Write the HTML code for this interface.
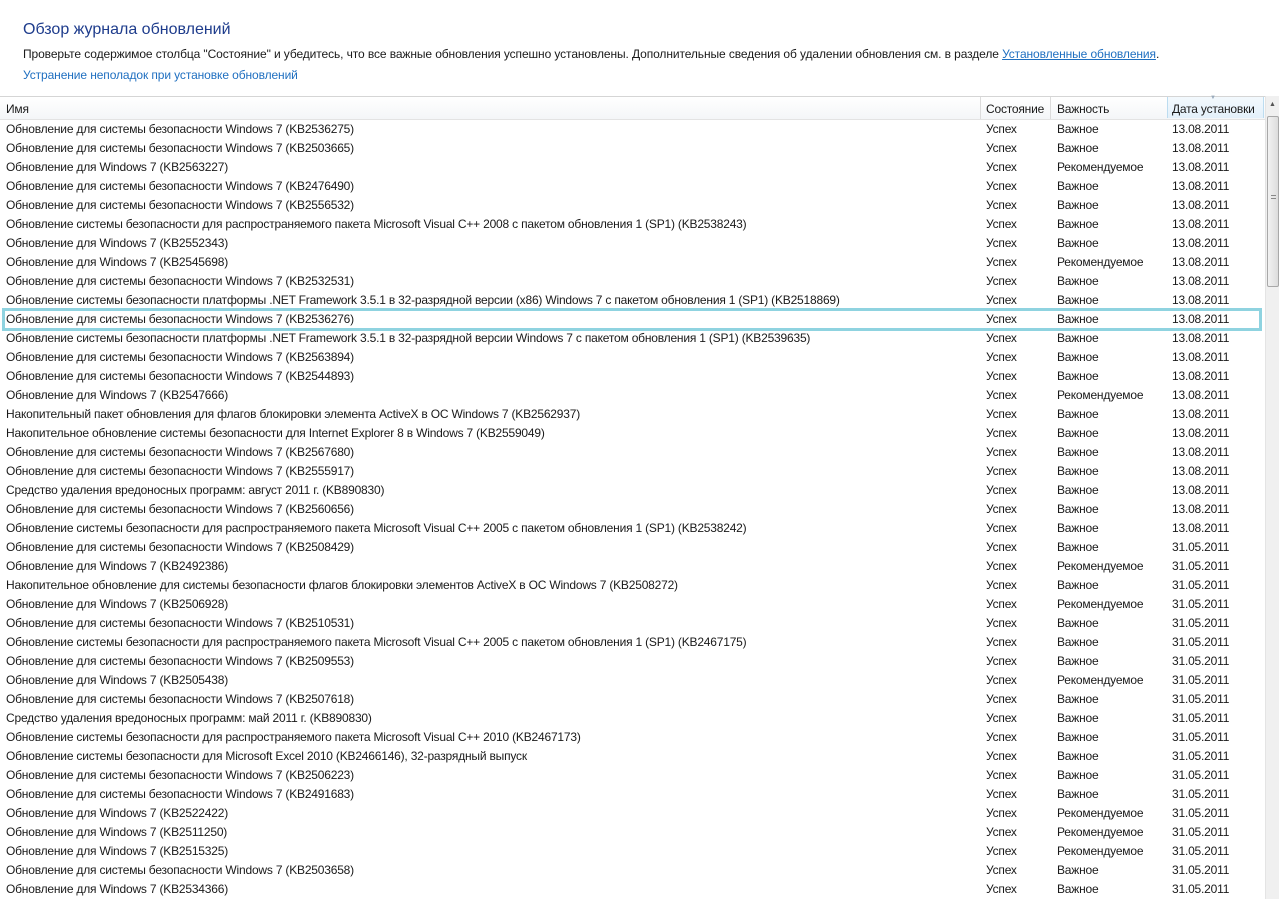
<!DOCTYPE html>
<html><head><meta charset="utf-8"><style>
body{margin:0;width:1279px;height:899px;overflow:hidden;background:#fff;font-family:"Liberation Sans",sans-serif;font-size:12px;color:#1a1a1a;position:relative}
.t{position:absolute;left:23px;top:21px;font-size:16px;color:#1e3c8c}
.p{position:absolute;left:23px;top:47px;white-space:nowrap;letter-spacing:-0.1px}
.p a{color:#1f6fc0;text-decoration:underline}
.l{position:absolute;left:23px;top:68px;color:#1f6fc0;letter-spacing:-0.1px}
.hdr{position:absolute;left:0;top:96px;width:1265px;height:22px;border-top:1px solid #d5d5d5;border-bottom:1px solid #e3e3e3;background:linear-gradient(#fff,#f4f6f8);letter-spacing:-0.2px}
.hdr span{position:absolute;top:5px}
.hdr i{position:absolute;top:0;width:1px;height:22px;background:#dcdcdc}
.sel{position:absolute;left:1167px;top:0;width:95px;height:21px;background:linear-gradient(#f3f9fd,#e3f0fa);border-left:1px solid #bcdcf0;border-right:1px solid #bcdcf0}
.rows{position:absolute;left:0;top:120px;letter-spacing:-0.2px}
.r{height:19px;line-height:19px;position:relative;white-space:nowrap}
.r span{position:absolute}
.a{left:6px}.b{left:986px}.c{left:1057px}.d{left:1172px}
.sb{position:absolute;left:1265px;top:96px;width:14px;height:803px;background:#f0f0f0;border-left:1px solid #e4e4e4}
.th{position:absolute;left:1px;top:20px;width:12px;height:171px;background:linear-gradient(90deg,#f2f2f2,#dcdcdc);border:1px solid #a8a8a8;border-radius:2px;box-sizing:border-box}
.hl{position:absolute;left:2px;top:308px;width:1260px;height:23px;border:3px solid #8fd3e0;box-sizing:border-box}
</style></head><body>
<div class="t">Обзор журнала обновлений</div>
<div class="p">Проверьте содержимое столбца "Состояние" и убедитесь, что все важные обновления успешно установлены. Дополнительные сведения об удалении обновления см. в разделе <a>Установленные обновления</a>.</div>
<div class="l">Устранение неполадок при установке обновлений</div>
<div class="hdr"><div class="sel"></div><span style="left:6px">Имя</span><i style="left:980px"></i><span style="left:986px">Состояние</span><i style="left:1050px"></i><span style="left:1057px">Важность</span><span style="left:1172px">Дата установки</span></div>
<div style="position:absolute;left:1210px;top:95px;font-size:6px;color:#9ab">▼</div>
<div class="sb"><span style="position:absolute;left:3px;top:5px;font-size:7px;color:#555">▲</span><div class="th"><span style="position:absolute;left:3px;top:78px;width:5px;border-top:1px solid #888;height:2px;border-bottom:1px solid #888"></span></div></div>
<div class="rows">
<div class="r"><span class="a">Обновление для системы безопасности Windows 7 (KB2536275)</span><span class="b">Успех</span><span class="c">Важное</span><span class="d">13.08.2011</span></div>
<div class="r"><span class="a">Обновление для системы безопасности Windows 7 (KB2503665)</span><span class="b">Успех</span><span class="c">Важное</span><span class="d">13.08.2011</span></div>
<div class="r"><span class="a">Обновление для Windows 7 (KB2563227)</span><span class="b">Успех</span><span class="c">Рекомендуемое</span><span class="d">13.08.2011</span></div>
<div class="r"><span class="a">Обновление для системы безопасности Windows 7 (KB2476490)</span><span class="b">Успех</span><span class="c">Важное</span><span class="d">13.08.2011</span></div>
<div class="r"><span class="a">Обновление для системы безопасности Windows 7 (KB2556532)</span><span class="b">Успех</span><span class="c">Важное</span><span class="d">13.08.2011</span></div>
<div class="r"><span class="a">Обновление системы безопасности для распространяемого пакета Microsoft Visual C++ 2008 с пакетом обновления 1 (SP1) (KB2538243)</span><span class="b">Успех</span><span class="c">Важное</span><span class="d">13.08.2011</span></div>
<div class="r"><span class="a">Обновление для Windows 7 (KB2552343)</span><span class="b">Успех</span><span class="c">Важное</span><span class="d">13.08.2011</span></div>
<div class="r"><span class="a">Обновление для Windows 7 (KB2545698)</span><span class="b">Успех</span><span class="c">Рекомендуемое</span><span class="d">13.08.2011</span></div>
<div class="r"><span class="a">Обновление для системы безопасности Windows 7 (KB2532531)</span><span class="b">Успех</span><span class="c">Важное</span><span class="d">13.08.2011</span></div>
<div class="r"><span class="a">Обновление системы безопасности платформы .NET Framework 3.5.1 в 32-разрядной версии (x86) Windows 7 с пакетом обновления 1 (SP1) (KB2518869)</span><span class="b">Успех</span><span class="c">Важное</span><span class="d">13.08.2011</span></div>
<div class="r"><span class="a">Обновление для системы безопасности Windows 7 (KB2536276)</span><span class="b">Успех</span><span class="c">Важное</span><span class="d">13.08.2011</span></div>
<div class="r"><span class="a">Обновление системы безопасности платформы .NET Framework 3.5.1 в 32-разрядной версии Windows 7 с пакетом обновления 1 (SP1) (KB2539635)</span><span class="b">Успех</span><span class="c">Важное</span><span class="d">13.08.2011</span></div>
<div class="r"><span class="a">Обновление для системы безопасности Windows 7 (KB2563894)</span><span class="b">Успех</span><span class="c">Важное</span><span class="d">13.08.2011</span></div>
<div class="r"><span class="a">Обновление для системы безопасности Windows 7 (KB2544893)</span><span class="b">Успех</span><span class="c">Важное</span><span class="d">13.08.2011</span></div>
<div class="r"><span class="a">Обновление для Windows 7 (KB2547666)</span><span class="b">Успех</span><span class="c">Рекомендуемое</span><span class="d">13.08.2011</span></div>
<div class="r"><span class="a">Накопительный пакет обновления для флагов блокировки элемента ActiveX в ОС Windows 7 (KB2562937)</span><span class="b">Успех</span><span class="c">Важное</span><span class="d">13.08.2011</span></div>
<div class="r"><span class="a">Накопительное обновление системы безопасности для Internet Explorer 8 в Windows 7 (KB2559049)</span><span class="b">Успех</span><span class="c">Важное</span><span class="d">13.08.2011</span></div>
<div class="r"><span class="a">Обновление для системы безопасности Windows 7 (KB2567680)</span><span class="b">Успех</span><span class="c">Важное</span><span class="d">13.08.2011</span></div>
<div class="r"><span class="a">Обновление для системы безопасности Windows 7 (KB2555917)</span><span class="b">Успех</span><span class="c">Важное</span><span class="d">13.08.2011</span></div>
<div class="r"><span class="a">Средство удаления вредоносных программ: август 2011 г. (KB890830)</span><span class="b">Успех</span><span class="c">Важное</span><span class="d">13.08.2011</span></div>
<div class="r"><span class="a">Обновление для системы безопасности Windows 7 (KB2560656)</span><span class="b">Успех</span><span class="c">Важное</span><span class="d">13.08.2011</span></div>
<div class="r"><span class="a">Обновление системы безопасности для распространяемого пакета Microsoft Visual C++ 2005 с пакетом обновления 1 (SP1) (KB2538242)</span><span class="b">Успех</span><span class="c">Важное</span><span class="d">13.08.2011</span></div>
<div class="r"><span class="a">Обновление для системы безопасности Windows 7 (KB2508429)</span><span class="b">Успех</span><span class="c">Важное</span><span class="d">31.05.2011</span></div>
<div class="r"><span class="a">Обновление для Windows 7 (KB2492386)</span><span class="b">Успех</span><span class="c">Рекомендуемое</span><span class="d">31.05.2011</span></div>
<div class="r"><span class="a">Накопительное обновление для системы безопасности флагов блокировки элементов ActiveX в ОС Windows 7 (KB2508272)</span><span class="b">Успех</span><span class="c">Важное</span><span class="d">31.05.2011</span></div>
<div class="r"><span class="a">Обновление для Windows 7 (KB2506928)</span><span class="b">Успех</span><span class="c">Рекомендуемое</span><span class="d">31.05.2011</span></div>
<div class="r"><span class="a">Обновление для системы безопасности Windows 7 (KB2510531)</span><span class="b">Успех</span><span class="c">Важное</span><span class="d">31.05.2011</span></div>
<div class="r"><span class="a">Обновление системы безопасности для распространяемого пакета Microsoft Visual C++ 2005 с пакетом обновления 1 (SP1) (KB2467175)</span><span class="b">Успех</span><span class="c">Важное</span><span class="d">31.05.2011</span></div>
<div class="r"><span class="a">Обновление для системы безопасности Windows 7 (KB2509553)</span><span class="b">Успех</span><span class="c">Важное</span><span class="d">31.05.2011</span></div>
<div class="r"><span class="a">Обновление для Windows 7 (KB2505438)</span><span class="b">Успех</span><span class="c">Рекомендуемое</span><span class="d">31.05.2011</span></div>
<div class="r"><span class="a">Обновление для системы безопасности Windows 7 (KB2507618)</span><span class="b">Успех</span><span class="c">Важное</span><span class="d">31.05.2011</span></div>
<div class="r"><span class="a">Средство удаления вредоносных программ: май 2011 г. (KB890830)</span><span class="b">Успех</span><span class="c">Важное</span><span class="d">31.05.2011</span></div>
<div class="r"><span class="a">Обновление системы безопасности для распространяемого пакета Microsoft Visual C++ 2010 (KB2467173)</span><span class="b">Успех</span><span class="c">Важное</span><span class="d">31.05.2011</span></div>
<div class="r"><span class="a">Обновление системы безопасности для Microsoft Excel 2010 (KB2466146), 32-разрядный выпуск</span><span class="b">Успех</span><span class="c">Важное</span><span class="d">31.05.2011</span></div>
<div class="r"><span class="a">Обновление для системы безопасности Windows 7 (KB2506223)</span><span class="b">Успех</span><span class="c">Важное</span><span class="d">31.05.2011</span></div>
<div class="r"><span class="a">Обновление для системы безопасности Windows 7 (KB2491683)</span><span class="b">Успех</span><span class="c">Важное</span><span class="d">31.05.2011</span></div>
<div class="r"><span class="a">Обновление для Windows 7 (KB2522422)</span><span class="b">Успех</span><span class="c">Рекомендуемое</span><span class="d">31.05.2011</span></div>
<div class="r"><span class="a">Обновление для Windows 7 (KB2511250)</span><span class="b">Успех</span><span class="c">Рекомендуемое</span><span class="d">31.05.2011</span></div>
<div class="r"><span class="a">Обновление для Windows 7 (KB2515325)</span><span class="b">Успех</span><span class="c">Рекомендуемое</span><span class="d">31.05.2011</span></div>
<div class="r"><span class="a">Обновление для системы безопасности Windows 7 (KB2503658)</span><span class="b">Успех</span><span class="c">Важное</span><span class="d">31.05.2011</span></div>
<div class="r"><span class="a">Обновление для Windows 7 (KB2534366)</span><span class="b">Успех</span><span class="c">Важное</span><span class="d">31.05.2011</span></div>
</div>
<div class="hl"></div>
</body></html>
